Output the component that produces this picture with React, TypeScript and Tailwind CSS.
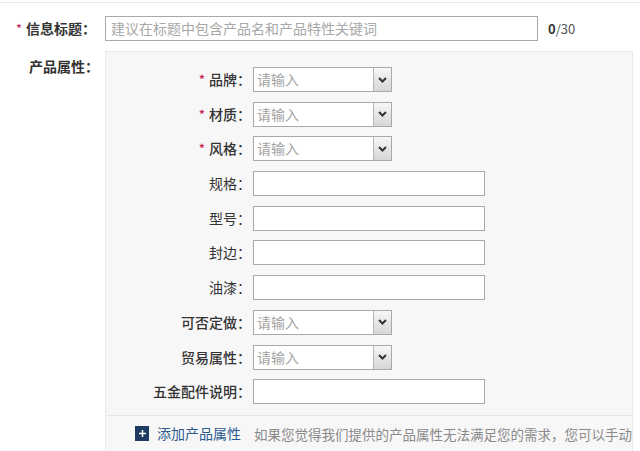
import type { ReactNode } from 'react';

const font = { fontFamily: '"Noto Sans CJK SC", "Liberation Sans", sans-serif' };

function Star() {
  return <span className="text-[#c81d4e] text-[13px] mr-[4px] leading-none">*</span>;
}

function SelectBox() {
  return (
    <div className="flex h-[25px] w-[139px] border border-[#a9a9a9] bg-white">
      <div className="flex-1 pl-[3px] text-[14px] leading-[23px] text-[#a3a3a3]">请输入</div>
      <div className="w-[18px] border-l border-[#b5b5b5] bg-gradient-to-b from-[#f7f7f7] to-[#d6d6d6] flex items-center justify-center">
        <svg width="9" height="6" viewBox="0 0 9 6">
          <path d="M1 1 L4.5 4.5 L8 1" fill="none" stroke="#333" strokeWidth="2" />
        </svg>
      </div>
    </div>
  );
}

function TextBox() {
  return <div className="h-[25px] w-[232px] border border-[#a9a9a9] bg-white" />;
}

function Row({ label, required, bold, children }: { label: string; required?: boolean; bold?: boolean; children: ReactNode }) {
  return (
    <div className="flex items-center h-[25px]">
      <div
        className={`w-[147px] pr-[2px] flex items-center justify-end text-[14px] text-[#333] ${bold ? 'font-medium' : ''}`}
      >
        {required && <Star />}
        <span>{label}：</span>
      </div>
      {children}
    </div>
  );
}

export default function App() {
  return (
    <div className="w-[640px] h-[451px] bg-white overflow-hidden" style={font}>
      <div className="h-[2px]" />
      <div className="h-px bg-[#e6e6e6]" />

      <div className="flex items-center h-[25px] mt-[13px]">
        <div className="w-[105px] pl-[16px] flex items-center">
          <Star />
          <span className="text-[14px] font-bold text-[#333]">信息标题：</span>
        </div>
        <div className="h-[25px] w-[433px] border border-[#a9a9a9] bg-white pl-[5px] text-[14px] leading-[23px] text-[#a8a8a8]">
          建议在标题中包含产品名和产品特性关键词
        </div>
        <div className="ml-[10px] text-[13px] text-[#555]">
          <span className="font-bold text-[#333]">0</span>/30
        </div>
      </div>

      <div className="flex mt-[10px]">
        <div className="w-[105px] pl-[29px] pt-[2px]">
          <span className="text-[14px] font-bold text-[#333]">产品属性：</span>
        </div>
        <div className="w-[528px] h-[400px] bg-[#f8f7f8] border-t border-l border-r border-[#ebebeb]">
          <div className="flex flex-col gap-[9.7px] pt-[15px]">
            <Row label="品牌" required bold>
              <SelectBox />
            </Row>
            <Row label="材质" required bold>
              <SelectBox />
            </Row>
            <Row label="风格" required bold>
              <SelectBox />
            </Row>
            <Row label="规格">
              <TextBox />
            </Row>
            <Row label="型号">
              <TextBox />
            </Row>
            <Row label="封边">
              <TextBox />
            </Row>
            <Row label="油漆">
              <TextBox />
            </Row>
            <Row label="可否定做" bold>
              <SelectBox />
            </Row>
            <Row label="贸易属性" bold>
              <SelectBox />
            </Row>
            <Row label="五金配件说明" bold>
              <TextBox />
            </Row>
          </div>
          <div className="mt-[11px] h-px bg-[#e6e6e6]" />
          <div className="flex items-center h-[15px] mt-[10px] pl-[29px] whitespace-nowrap">
            <div className="w-[15px] h-[15px] bg-[#1f3b63] flex items-center justify-center">
              <svg width="9" height="9" viewBox="0 0 9 9">
                <path d="M4.5 1 V8 M1 4.5 H8" stroke="#fff" strokeWidth="1.5" />
              </svg>
            </div>
            <span className="ml-[8px] text-[14px] text-[#2b5b8e]">添加产品属性</span>
            <span className="ml-[13px] text-[13.5px] text-[#8a8a8a]">如果您觉得我们提供的产品属性无法满足您的需求，您可以手动</span>
          </div>
        </div>
      </div>
    </div>
  );
}
